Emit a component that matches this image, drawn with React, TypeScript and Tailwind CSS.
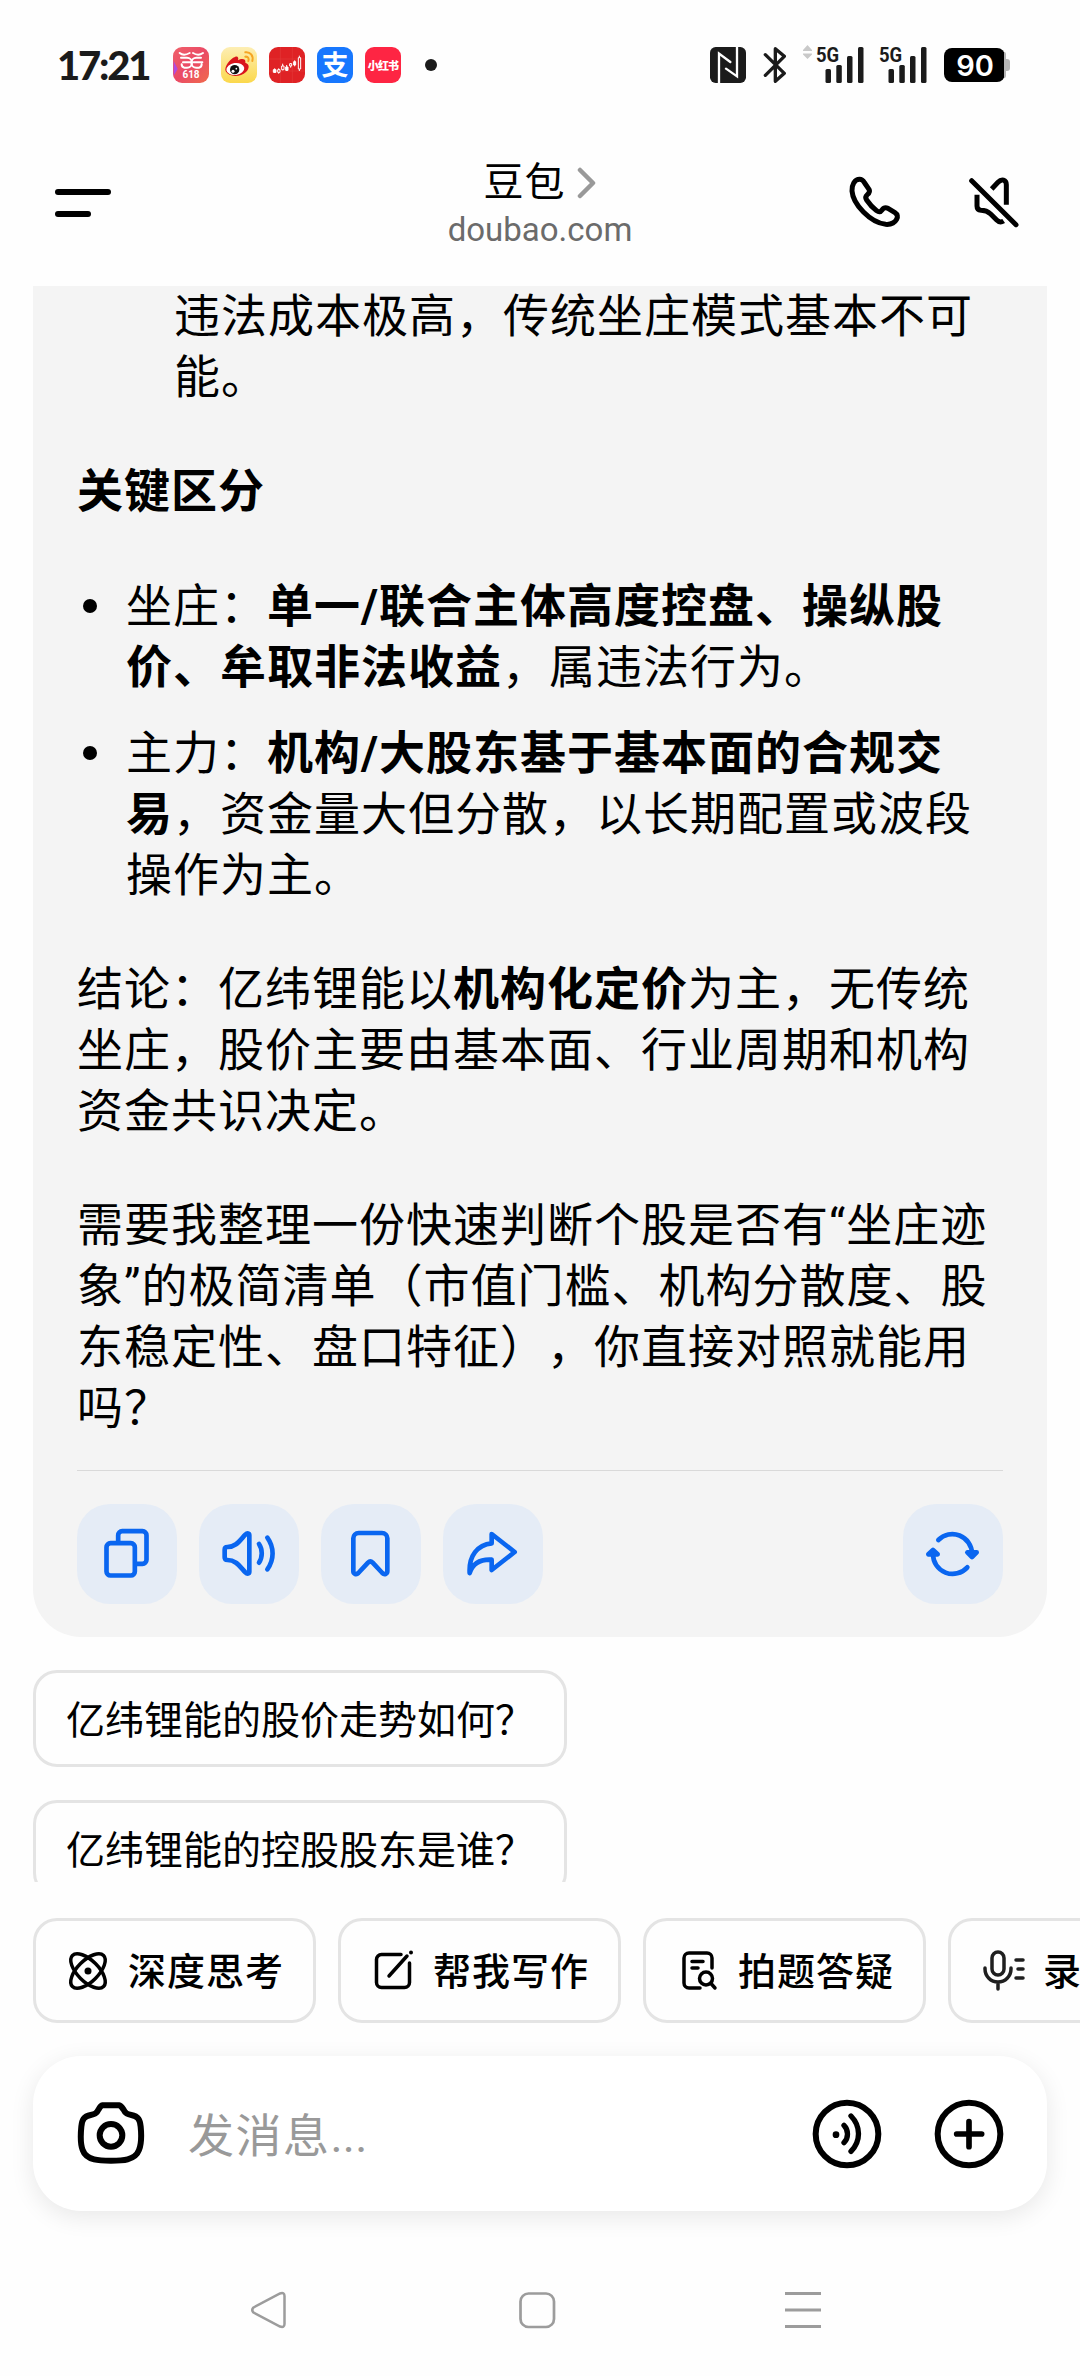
import React from 'react';

// --- Status bar ---

const SignalBars: React.FC = () => (
  <svg width="40" height="36" viewBox="0 0 40 36" fill="#1b1b1b">
    <rect x="0.5" y="22" width="5.5" height="14" rx="1.5" />
    <rect x="11.3" y="18" width="5.5" height="18" rx="1.5" />
    <rect x="22" y="9" width="5.5" height="27" rx="1.5" />
    <rect x="33" y="0" width="5.5" height="36" rx="1.5" />
  </svg>
);

const Signal: React.FC = () => (
  <div className="relative h-9 w-[49px] pl-[9px]">
    <SignalBars />
    <span className="absolute -top-[4px] left-0 origin-left scale-x-[0.88] font-[Roboto] text-[21px] leading-[24px] font-bold text-[#1b1b1b]">
      5G
    </span>
  </div>
);

const StatusBar: React.FC = () => (
  <div className="flex h-[130px] shrink-0 items-center pl-[57px]">
    <div className="w-[116px] font-[Lato] text-[40px] leading-[40px] font-black tracking-[-2.2px] text-[#1b1b1b]">17:21</div>
    <div className="flex items-center gap-3">
      <div className="relative size-9 rounded-[9px] bg-linear-to-br from-[#f0606a] via-[#ea4a66] to-[#f06a4a]">
        <svg width="36" height="36" viewBox="0 0 108 108" fill="none" stroke="#fff" strokeWidth="6" strokeLinecap="round">
          <path d="M2 42 L14 66 L2 86Z" fill="#b14be0" stroke="none" />
          <path d="M20 18 Q32 28 50 18 M60 18 Q76 28 90 18" />
          <path d="M24 32 H42 A14 14 0 0 1 42 62 H34 A10 10 0 0 1 26 52 M30 46 H52" />
          <path d="M84 32 H70 A14 14 0 0 0 70 62 H78 A10 10 0 0 0 86 52 M62 46 H88" />
        </svg>
        <span className="absolute inset-x-0 bottom-[2px] text-center font-[Roboto] text-[10px] leading-[12px] font-bold text-white">618</span>
      </div>
      <svg width="36" height="36" viewBox="0 0 108 108" fill="none">
        <defs>
          <linearGradient id="wb" x1="0" y1="0" x2="0" y2="1">
            <stop offset="0" stopColor="#fdeeb4" />
            <stop offset="1" stopColor="#fbd84c" />
          </linearGradient>
        </defs>
        <rect width="108" height="108" rx="27" fill="url(#wb)" />
        <path d="M42 30 C50 26 54 33 51 40 C60 34 76 34 73 47 C86 51 86 64 75 75 C58 91 24 91 14 73 C8 60 28 34 42 30Z" fill="#d9141c" />
        <ellipse cx="43" cy="66" rx="27" ry="18" fill="#fff" transform="rotate(-8 43 66)" />
        <circle cx="41" cy="68" r="14" fill="#111" />
        <circle cx="36" cy="73" r="4.500" fill="#fff" />
        <circle cx="46" cy="65" r="2.500" fill="#fff" />
        <path d="M73 16 C88 14 98 26 94 42 M73 29 C81 28 85 34 82 42" stroke="#f5a524" strokeWidth="6" strokeLinecap="round" />
      </svg>
      <svg width="36" height="36" viewBox="0 0 108 108" fill="none">
        <rect width="108" height="108" rx="27" fill="#df2225" />
        <path d="M34 0 V108 M70 0 V108 M0 36 H108 M0 72 H108" stroke="#e33a3a" strokeWidth="2" />
        <g stroke="#fff" strokeWidth="3">
          <path d="M17 64 V78 M29 64 V80 M41 50 V70 M53 54 V72 M65 48 V62 M77 40 V58 M91 26 V72" />
          <path d="M13 68 H21 V76 H13Z M50 60 H57 V70 H50Z M74 44 H80 V54 H74Z" fill="#fff" />
          <path d="M26 68 H33 V76 H26Z M38 57 H45 V68 H38Z M62 50 H68 V57 H62Z M88 32 H95 V66 H88Z" fill="#df2225" />
        </g>
      </svg>
      <div className="size-9 rounded-[9px] bg-[#1777fe] text-center font-['Noto_Sans_CJK_SC'] text-[27px] leading-[34px] font-bold text-white">
        支
      </div>
      <div className="flex size-9 items-center justify-center rounded-[9px] bg-[#fe2543] font-['Noto_Sans_CJK_SC'] text-[11px] leading-[16px] font-black tracking-[-0.8px] whitespace-nowrap text-white">
        小红书
      </div>
    </div>
    <div className="ml-6 size-3 rounded-full bg-[#1b1b1b]" />

    <div className="ml-[273px] flex items-center">
      <svg width="36" height="36" viewBox="0 0 108 108" fill="none" className="-mt-px">
        <rect width="108" height="108" rx="17" fill="#1b1b1b" />
        <path d="M27 108 V20 L61 45 M81 0 V88 L48 65" stroke="#fff" strokeWidth="7" strokeLinecap="round" />
      </svg>
      <svg width="24" height="38" viewBox="0 0 72 114" fill="none" className="ml-[17px]" stroke="#1b1b1b" strokeWidth="10" strokeLinejoin="round" strokeLinecap="round">
        <path d="M7 26 L64 82 L37 106 V8 L64 31 L7 88" />
      </svg>
      <svg width="11" height="14" viewBox="0 0 11 14" fill="#c9c9c9" className="mt-[-26px] ml-[15px]">
        <path d="M5.500 0 L10 5 V6 H1 V5Z M1 8.500 H10 V9.500 L5.500 14 L1 9.500Z" />
      </svg>
      <div className="ml-[3px] flex gap-[14px]">
        <Signal />
        <Signal />
      </div>
      <div className="ml-[16px] flex h-[34px] w-[61px] items-center justify-center rounded-[8px] bg-black pl-px font-[Inter] text-[29px] leading-none font-semibold text-white">
        90
      </div>
      <div className="-ml-px h-[26px] w-[2px] rounded-r bg-[#b5b5b5]" />
      <div className="h-3 w-1 rounded-r-[3px] bg-[#b5b5b5]" />
    </div>
  </div>
);

// --- Header ---

const Header: React.FC = () => (
  <header className="flex h-[156px] shrink-0 items-start justify-between pr-[60px] pl-[55px]">
    <div className="mt-[59px] flex w-[231px] flex-col gap-4">
      <div className="h-[6px] w-14 rounded-full bg-black" />
      <div className="h-[6px] w-9 rounded-full bg-black" />
    </div>
    <div className="mt-[27px] flex flex-col items-center pl-[5px]">
      <div className="flex h-[52px] items-center text-[40px] leading-[52px] tracking-[1px]">
        豆包
        <svg width="19" height="32" viewBox="0 0 19 32" fill="none" className="ml-[12px]">
          <path d="M3 3 L16 16 L3 29" stroke="#999" strokeWidth="4.500" strokeLinecap="round" strokeLinejoin="round" />
        </svg>
      </div>
      <div className="mt-px text-[33px] leading-[40px] text-[#6b6b6b]">doubao.com</div>
    </div>
    <div className="mt-[46px] flex w-[231px] justify-end gap-[67px]">
      <svg width="52" height="52" viewBox="86 80 156 156" fill="none" stroke="#000" strokeWidth="15" strokeLinejoin="round">
        <path d="M118 90 C126 90 130 96 133 101 L146 120 C150 127 146 132 141 136 C135 141 135 146 139 152 C147 164 158 176 169 184 C175 189 180 189 185 182 C190 175 196 174 203 177 L224 190 C232 195 233 203 229 210 C223 221 210 226 196 225 C150 220 98 165 95 125 C94 107 102 90 118 90Z" />
      </svg>
      <svg width="52" height="52" viewBox="442 80 156 156" fill="none" stroke="#000" strokeWidth="15">
        <path d="M453 94 L586 226" strokeLinecap="round" />
        <path d="M513 119 L532 99 C543 87 557 91 557 106 V166" />
        <path d="M469 136 V170 Q469 182 481 183 C494 183 500 185 510 194 L528 212 Q538 222 549 215" />
      </svg>
    </div>
  </header>
);

// --- Answer card ---

const ActionButton: React.FC<{ children: React.ReactNode }> = ({ children }) => (
  <button className="size-[100px] rounded-[33px] bg-[#e5ecf6]">
    <svg width="100" height="100" viewBox="0 0 300 300" fill="none" stroke="#0a66f0" strokeWidth="14" strokeLinecap="round" strokeLinejoin="round">
      {children}
    </svg>
  </button>
);

const Bullet: React.FC<{ children: React.ReactNode }> = ({ children }) => (
  <li className="flex">
    <span className="mt-[23px] mr-[29px] ml-[6px] size-[14px] shrink-0 rounded-full bg-black" />
    <div>{children}</div>
  </li>
);

const AnswerCard: React.FC = () => (
  <section className="h-[1351px] shrink-0 rounded-b-[48px] bg-[#f4f4f4] px-[44px] text-[46px] leading-[61px] tracking-[1px] whitespace-nowrap">
    <p className="pl-[97px]">
      违法成本极高，传统坐庄模式基本不可
      <br />
      能。
    </p>
    <h3 className="mt-[53px] font-bold">关键区分</h3>
    <ul className="mt-[54px] flex flex-col gap-[25px]">
      <Bullet>
        坐庄：<b>单一/联合主体高度控盘、操纵股</b>
        <br />
        <b>价、牟取非法收益</b>，属违法行为。
      </Bullet>
      <Bullet>
        主力：<b>机构/大股东基于基本面的合规交</b>
        <br />
        <b>易</b>，资金量大但分散，以长期配置或波段
        <br />
        操作为主。
      </Bullet>
    </ul>
    <p className="mt-[53px]">
      结论：亿纬锂能以<b>机构化定价</b>为主，无传统
      <br />
      坐庄，股价主要由基本面、行业周期和机构
      <br />
      资金共识决定。
    </p>
    <p className="mt-[53px]">
      需要我整理一份快速判断个股是否有“坐庄迹
      <br />
      象”的极简清单（市值门槛、机构分散度、股
      <br />
      东稳定性、盘口特征），你直接对照就能用
      <br />
      吗？
    </p>
    <div className="mt-[31px] h-px bg-[#d9d9d9]" />
    <div className="mt-[33px] flex gap-[22px]">
      <ActionButton>
        <rect x="88.5" y="117.5" width="85" height="97" rx="12" />
        <path d="M123.500 112 V93.500 a12 12 0 0 1 12 -12 H196.500 a12 12 0 0 1 12 12 V167.500 a12 12 0 0 1 -12 12 H180" />
      </ActionButton>
      <ActionButton>
        <path d="M85 129 C111 129 122 110 139 92 C145 86 151 88 151 94 V203 C151 209 145 211 139 205 C122 187 111 168 85 168 Q77 168 77 160 V137 Q77 129 85 129Z" />
        <path d="M180 120 C191 136 191 160 180 176 M205 101 C226 130 226 167 205 196" />
      </ActionButton>
      <ActionButton>
        <path d="M113 87 H183 A16 16 0 0 1 199 103 V202 C199 210 190 213 184 207 L155 176 Q148 169 141 176 L112 207 C106 213 97 210 97 202 V103 A16 16 0 0 1 113 87Z" />
      </ActionButton>
      <ActionButton>
        <path d="M146 90 L215 144 L146 198 V167 C112 165 90 176 80 207 C77 155 104 122 146 118Z" />
      </ActionButton>
      <div className="ml-auto">
        <ActionButton>
          <path d="M106 108 A59 59 0 0 1 207 148 M193 190 A59 59 0 0 1 90 150" />
          <path d="M193 145 H221 L207 159Z M76 151 H104 L90 138Z" fill="#0a66f0" />
        </ActionButton>
      </div>
    </div>
  </section>
);

const suggestions = ['亿纬锂能的股价走势如何？', '亿纬锂能的控股股东是谁？'];

// --- Bottom tools ---

const chips: { label: string; icon: React.ReactNode }[] = [
  {
    label: '深度思考',
    icon: (
      <>
        <ellipse cx="21" cy="21" rx="22" ry="10.500" transform="rotate(45 21 21)" />
        <ellipse cx="21" cy="21" rx="22" ry="10.500" transform="rotate(-45 21 21)" />
        <circle cx="21" cy="21" r="3.500" fill="#000" stroke="none" />
      </>
    ),
  },
  {
    label: '帮我写作',
    icon: (
      <>
        <path d="M29 4.500 H9.500 A5 5 0 0 0 4.500 9.500 V32.500 A5 5 0 0 0 9.500 37.500 H32.500 A5 5 0 0 0 37.500 32.500 V13" />
        <path d="M17 26 L35 6" strokeWidth="3.500" />
        <circle cx="39" cy="2.500" r="2" fill="#000" stroke="none" />
      </>
    ),
  },
  {
    label: '拍题答疑',
    icon: (
      <g transform="translate(2 0)">
        <path d="M21 38 H10 A5 5 0 0 1 5 33 V8 A5 5 0 0 1 10 3 H28 A5 5 0 0 1 33 8 V18 M13 11.500 H24 M13 18 H19" />
        <circle cx="27" cy="28.500" r="6.500" />
        <path d="M32 33.500 L36 38" />
      </g>
    ),
  },
  {
    label: '录音',
    icon: (
      <g transform="translate(2 0)" stroke="#1f1f1f">
        <rect x="8" y="2" width="12" height="23" rx="6" />
        <path d="M1 18 V19 A13 13 0 0 0 27 19 V18 M14 32 V39 M32 10 H39 M34 19 H39 M32 28 H39" />
      </g>
    ),
  },
];

const ToolChips: React.FC = () => (
  <div className="mt-9 flex h-[105px] shrink-0 gap-[22px] overflow-hidden pl-[33px]">
    {chips.map(c => (
      <div key={c.label} className="flex h-[105px] w-[283px] shrink-0 items-center rounded-[24px] border-[3px] border-[#e4e4e4] pl-[31px]">
        <svg width="42" height="42" viewBox="0 0 42 42" fill="none" stroke="#000" strokeWidth="3.500" strokeLinecap="round" className="overflow-visible">
          {c.icon}
        </svg>
        <span className="mt-[3px] ml-[19px] text-[38px] leading-[50px] font-medium tracking-[1px] whitespace-nowrap">{c.label}</span>
      </div>
    ))}
  </div>
);

const Composer: React.FC = () => (
  <div className="mx-[33px] mt-[33px] flex h-[155px] shrink-0 items-center rounded-[48px] bg-white pr-[43px] pl-[44px] shadow-[0_6px_24px_rgba(0,0,0,0.09)]">
    <svg width="68" height="68" viewBox="170 180 204 204" fill="none" stroke="#000" strokeWidth="18">
      <path d="M247 196 H296 C302 197 305 202 309 208 C315 221 322 223 333 225 C354 229 359 240 361 260 C364 290 362 315 356 330 C344 362 305 362 272 362 C239 362 198 362 187 330 C181 315 180 290 183 260 C185 240 190 229 211 225 C222 223 229 221 235 208 C238 202 241 197 247 196Z" />
      <circle cx="272" cy="286" r="34" />
    </svg>
    <div className="mt-[5px] ml-[43px] flex-1 text-[46px] leading-[61px] tracking-[1.500px] text-[#999]">
      发消息<span className="tracking-[0.2px]">...</span>
    </div>
    <svg width="70" height="70" viewBox="0 0 210 210" fill="none" stroke="#000" strokeWidth="18" strokeLinecap="round">
      <circle cx="105" cy="105" r="94" />
      <circle cx="72" cy="107" r="10" fill="#000" stroke="none" />
      <path d="M96 79 C110 93 110 117 96 131 M117 51 C147 82 147 126 117 157" strokeWidth="16" />
    </svg>
    <svg width="70" height="70" viewBox="0 0 210 210" fill="none" stroke="#000" strokeWidth="18" strokeLinecap="round" className="ml-[52px]">
      <circle cx="105" cy="105" r="94" />
      <path d="M105 68 V143 M68 105 H143" strokeWidth="17" />
    </svg>
  </div>
);

const NavBar: React.FC = () => (
  <nav className="mt-[79px] flex h-10 shrink-0 items-center pl-[250px] text-[#9c9c9c]">
    <svg width="38" height="40" viewBox="0 0 38 40" fill="none" stroke="currentColor" strokeWidth="2.500">
      <path d="M3.500 17.500 L30 3.500 Q34.500 2 34.500 6 V34 Q34.500 38 30 36.500 L3.500 22.500 Q1 20 3.500 17.500Z" />
    </svg>
    <svg width="38" height="40" viewBox="0 0 38 40" fill="none" stroke="currentColor" strokeWidth="2.700" className="ml-[230px]">
      <rect x="2.500" y="3.500" width="33.500" height="33.500" rx="8" />
    </svg>
    <svg width="36" height="40" viewBox="0 0 36 40" fill="none" stroke="currentColor" strokeWidth="3" className="ml-[229px]">
      <path d="M0 3.500 H36 M0 20 H36 M0 36.500 H36" />
    </svg>
  </nav>
);

const App: React.FC = () => {
  return (
    <div className="flex h-[2376px] w-[1080px] flex-col overflow-hidden bg-[#fefefe] font-[Roboto,'Noto_Sans_CJK_SC',sans-serif] text-black [text-spacing-trim:space-all]">
      <StatusBar />
      <Header />
      <main className="flex h-[1596px] shrink-0 flex-col overflow-hidden px-[33px]">
        <AnswerCard />
        <div className="mt-[33px] flex flex-col items-start gap-[33px]">
          {suggestions.map(s => (
            <div key={s} className="flex h-[97px] shrink-0 items-center rounded-[24px] border-[3px] border-[#e4e4e4] px-[30px] pt-[4px] text-[39px] leading-[60px] whitespace-nowrap">
              {s}
            </div>
          ))}
        </div>
      </main>
      <ToolChips />
      <Composer />
      <NavBar />
    </div>
  );
};

export default App;
